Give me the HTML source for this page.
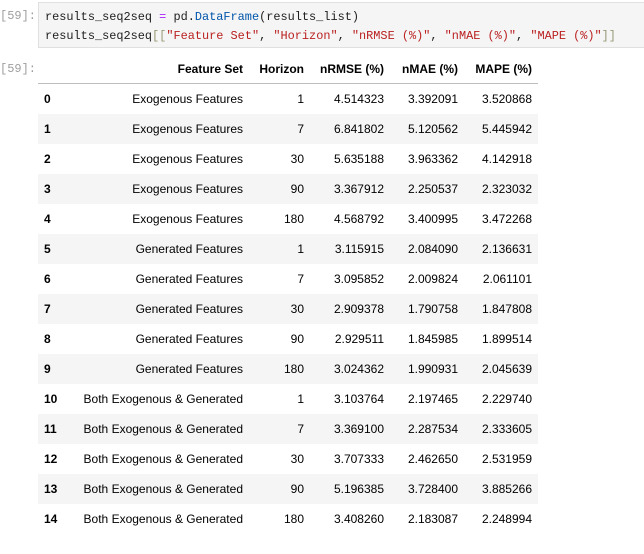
<!DOCTYPE html>
<html><head><meta charset="utf-8"><style>
body{margin:0;background:#fff;width:644px;height:554px;overflow:hidden;position:relative;font-family:"Liberation Sans",sans-serif;}
.p{position:absolute;left:0;font-family:"Liberation Mono",monospace;font-size:12px;color:#9e9e9e;}
.code{position:absolute;left:38px;top:2px;width:606px;height:46px;background:#f5f5f5;border:1px solid #e0e0e0;border-right:none;box-sizing:border-box;font-family:"Liberation Mono",monospace;font-size:11.9px;color:#212121;padding:5px 0 0 6px;line-height:18.5px;white-space:pre;overflow:hidden;}
.s{color:#ba2121}.f{color:#0055aa}.o{color:#aa22ff}.b{color:#999977}
table{position:absolute;left:38px;top:55px;width:500px;border-collapse:collapse;font-size:12px;color:#000;table-layout:fixed;}
td,th{height:30px;padding:0 6px 0 0;text-align:right;white-space:nowrap;}
th{font-weight:bold;border-bottom:1px solid #bdbdbd;height:28px;}
td:first-child{text-align:left;padding-left:6px;font-weight:bold;}
</style></head><body>
<div class="p" style="top:9px">[59]:</div>
<div class="code">results_seq2seq <span class="o">=</span> pd.<span class="f">DataFrame</span>(results_list)
results_seq2seq<span class="b">[[</span><span class="s">"Feature Set"</span>, <span class="s">"Horizon"</span>, <span class="s">"nRMSE (%)"</span>, <span class="s">"nMAE (%)"</span>, <span class="s">"MAPE (%)"</span><span class="b">]]</span></div>
<div class="p" style="top:62px">[59]:</div>
<table>
<colgroup><col style="width:27px"><col style="width:184px"><col style="width:61px"><col style="width:80px"><col style="width:74px"><col style="width:74px"></colgroup>
<thead><tr><th></th><th>Feature Set</th><th>Horizon</th><th>nRMSE (%)</th><th>nMAE (%)</th><th>MAPE (%)</th></tr></thead>
<tbody>
<tr style="background:#fff"><td>0</td><td>Exogenous Features</td><td>1</td><td>4.514323</td><td>3.392091</td><td>3.520868</td></tr>
<tr style="background:#f5f5f5"><td>1</td><td>Exogenous Features</td><td>7</td><td>6.841802</td><td>5.120562</td><td>5.445942</td></tr>
<tr style="background:#fff"><td>2</td><td>Exogenous Features</td><td>30</td><td>5.635188</td><td>3.963362</td><td>4.142918</td></tr>
<tr style="background:#f5f5f5"><td>3</td><td>Exogenous Features</td><td>90</td><td>3.367912</td><td>2.250537</td><td>2.323032</td></tr>
<tr style="background:#fff"><td>4</td><td>Exogenous Features</td><td>180</td><td>4.568792</td><td>3.400995</td><td>3.472268</td></tr>
<tr style="background:#f5f5f5"><td>5</td><td>Generated Features</td><td>1</td><td>3.115915</td><td>2.084090</td><td>2.136631</td></tr>
<tr style="background:#fff"><td>6</td><td>Generated Features</td><td>7</td><td>3.095852</td><td>2.009824</td><td>2.061101</td></tr>
<tr style="background:#f5f5f5"><td>7</td><td>Generated Features</td><td>30</td><td>2.909378</td><td>1.790758</td><td>1.847808</td></tr>
<tr style="background:#fff"><td>8</td><td>Generated Features</td><td>90</td><td>2.929511</td><td>1.845985</td><td>1.899514</td></tr>
<tr style="background:#f5f5f5"><td>9</td><td>Generated Features</td><td>180</td><td>3.024362</td><td>1.990931</td><td>2.045639</td></tr>
<tr style="background:#fff"><td>10</td><td>Both Exogenous &amp; Generated</td><td>1</td><td>3.103764</td><td>2.197465</td><td>2.229740</td></tr>
<tr style="background:#f5f5f5"><td>11</td><td>Both Exogenous &amp; Generated</td><td>7</td><td>3.369100</td><td>2.287534</td><td>2.333605</td></tr>
<tr style="background:#fff"><td>12</td><td>Both Exogenous &amp; Generated</td><td>30</td><td>3.707333</td><td>2.462650</td><td>2.531959</td></tr>
<tr style="background:#f5f5f5"><td>13</td><td>Both Exogenous &amp; Generated</td><td>90</td><td>5.196385</td><td>3.728400</td><td>3.885266</td></tr>
<tr style="background:#fff"><td>14</td><td>Both Exogenous &amp; Generated</td><td>180</td><td>3.408260</td><td>2.183087</td><td>2.248994</td></tr>
</tbody></table>
</body></html>
